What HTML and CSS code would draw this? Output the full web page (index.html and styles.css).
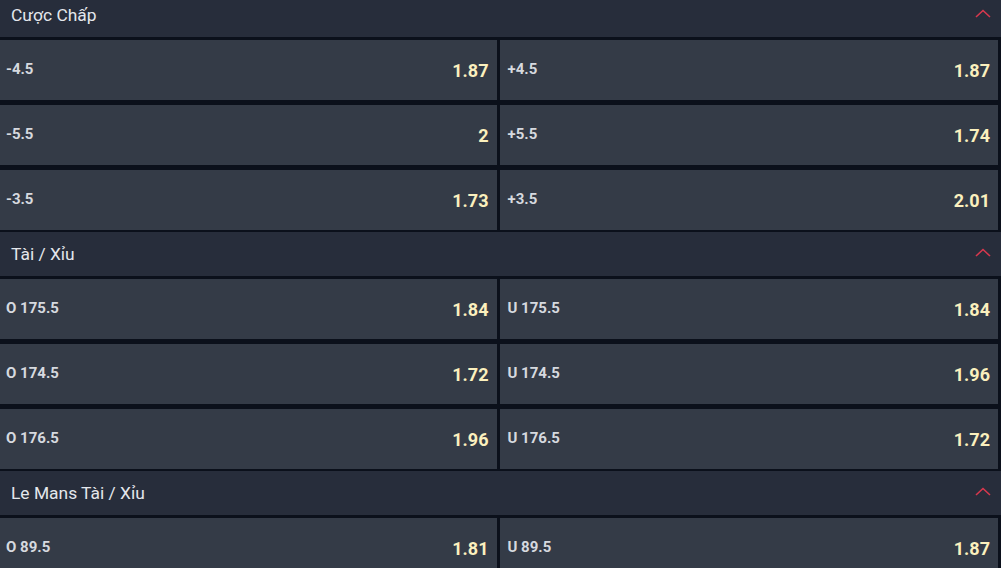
FILE: index.html
```html
<!DOCTYPE html>
<html lang="vi">
<head>
<meta charset="utf-8">
<title>Markets</title>
<link rel="stylesheet" href="styles.css">
</head>
<body>
<div class="markets">
  <section class="market">
    <div class="market-head">
      <span class="market-title">Cược Chấp</span>
      <svg class="chev" width="16" height="9" viewBox="0 0 16 9"><path d="M1 8 L8 1.5 L15 8" fill="none" stroke="#d7384e" stroke-width="1.6"/></svg>
    </div>
    <div class="grid">
      <div class="cell"><span class="lbl">-4.5</span><span class="odd">1.87</span></div>
      <div class="cell"><span class="lbl">+4.5</span><span class="odd">1.87</span></div>
      <div class="cell"><span class="lbl">-5.5</span><span class="odd">2</span></div>
      <div class="cell"><span class="lbl">+5.5</span><span class="odd">1.74</span></div>
      <div class="cell"><span class="lbl">-3.5</span><span class="odd">1.73</span></div>
      <div class="cell"><span class="lbl">+3.5</span><span class="odd">2.01</span></div>
    </div>
  </section>
  <section class="market">
    <div class="market-head">
      <span class="market-title">Tài / Xỉu</span>
      <svg class="chev" width="16" height="9" viewBox="0 0 16 9"><path d="M1 8 L8 1.5 L15 8" fill="none" stroke="#d7384e" stroke-width="1.6"/></svg>
    </div>
    <div class="grid">
      <div class="cell"><span class="lbl">O 175.5</span><span class="odd">1.84</span></div>
      <div class="cell"><span class="lbl">U 175.5</span><span class="odd">1.84</span></div>
      <div class="cell"><span class="lbl">O 174.5</span><span class="odd">1.72</span></div>
      <div class="cell"><span class="lbl">U 174.5</span><span class="odd">1.96</span></div>
      <div class="cell"><span class="lbl">O 176.5</span><span class="odd">1.96</span></div>
      <div class="cell"><span class="lbl">U 176.5</span><span class="odd">1.72</span></div>
    </div>
  </section>
  <section class="market">
    <div class="market-head">
      <span class="market-title">Le Mans Tài / Xỉu</span>
      <svg class="chev" width="16" height="9" viewBox="0 0 16 9"><path d="M1 8 L8 1.5 L15 8" fill="none" stroke="#d7384e" stroke-width="1.6"/></svg>
    </div>
    <div class="grid">
      <div class="cell"><span class="lbl">O 89.5</span><span class="odd">1.81</span></div>
      <div class="cell"><span class="lbl">U 89.5</span><span class="odd">1.87</span></div>
    </div>
  </section>
</div>
</body>
</html>
```
FILE: styles.css
```css
html, body {
  margin: 0;
  padding: 0;
  background: #0b101b;
  overflow: hidden;
}
body {
  font-family: Roboto, "Noto Sans", Arial, sans-serif;
}
.markets {
  margin: -7px 0 0 -2px;
}
.market-head {
  height: 44px;
  background: #272d3b;
  display: flex;
  align-items: center;
  justify-content: space-between;
  padding: 0 10px 0 13px;
}
.market-title {
  color: #e4e7ec;
  font-size: 17.4px;
  font-weight: 400;
}
.chev {
  display: block;
  margin-top: -3px;
}
.grid {
  display: grid;
  grid-template-columns: 1fr 1fr;
  column-gap: 3px;
  row-gap: 5px;
  padding: 3px 3px 2px 0;
}
.cell {
  height: 60px;
  background: #343b47;
  display: flex;
  align-items: center;
  justify-content: space-between;
  padding: 0 8px;
}
.lbl {
  color: #d6d9df;
  font-size: 15px;
  font-weight: 700;
  margin-top: -3px;
}
.odd {
  color: #fbf0be;
  font-size: 18px;
  font-weight: 700;
}
```
